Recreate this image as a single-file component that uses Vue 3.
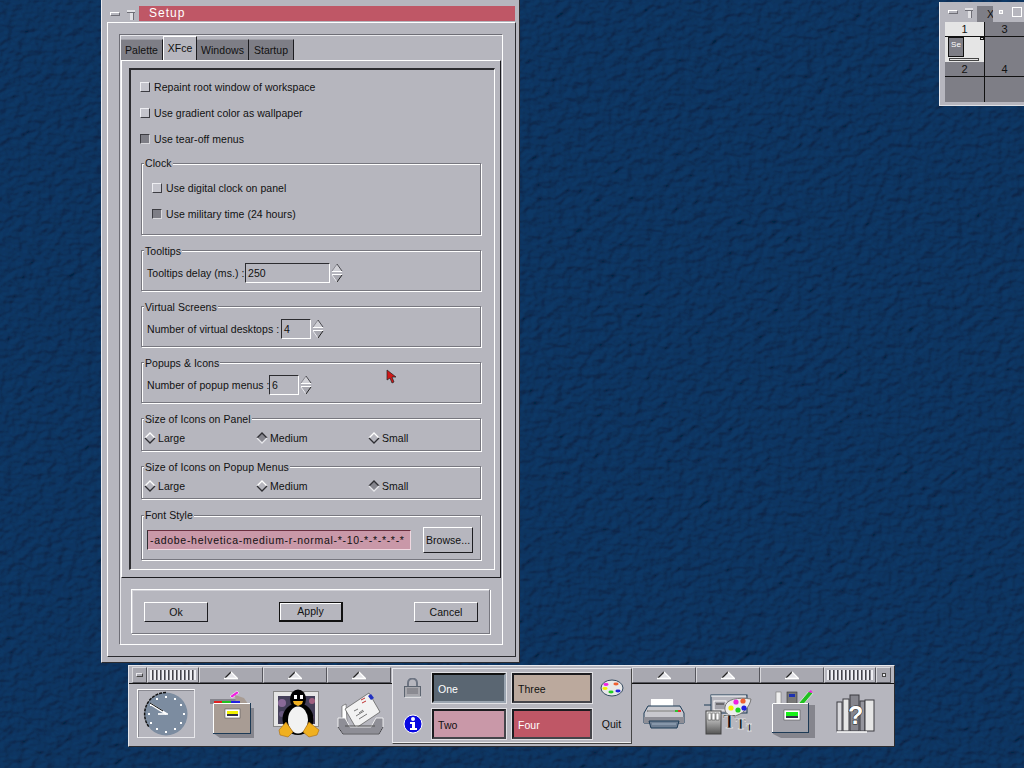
<template>
  <div class="desktop">
    <svg class="wallpaper" width="1024" height="768">
      <filter id="emboss" x="0" y="0" width="100%" height="100%">
        <feTurbulence type="fractalNoise" baseFrequency="0.1 0.13" numOctaves="2" seed="7" result="noise" />
        <feDiffuseLighting in="noise" surfaceScale="2.4" diffuseConstant="1" lighting-color="#0f3966">
          <feDistantLight azimuth="225" elevation="60" />
        </feDiffuseLighting>
      </filter>
      <rect width="1024" height="768" filter="url(#emboss)" />
    </svg>

    <!-- setup window -->
    <div class="window setup">
      <div class="titlebar">
        <span class="btn-dash"></span>
        <span class="btn-pin"></span>
        <div class="title">Setup</div>
      </div>
      <div class="frame">
        <div class="frame-inner">
          <div class="tabs">
            <div v-for="t in tabs" :key="t" class="tab" :class="{ active: t === 'XFce' }">{{ t }}</div>
          </div>
          <div class="tab-body">
            <div class="sunk">
              <div v-for="c in mainChecks" :key="c.text" class="check-row">
                <span class="check" :class="{ on: c.on }"></span>{{ c.text }}
              </div>

              <div class="groups">
                <div class="group clock">
                  <span class="legend high">Clock</span>
                  <div class="check-row">
                    <span class="check"></span>Use digital clock on panel
                  </div>
                  <div class="check-row">
                    <span class="check on"></span>Use military time (24 hours)
                  </div>
                </div>

                <div v-for="s in spinGroups" :key="s.legend" class="group spin-group">
                  <span class="legend">{{ s.legend }}</span>
                  <span class="spin-label" :style="{ width: s.labelWidth + 'px' }">{{ s.label }}</span>
                  <span class="field" :style="{ width: s.width + 'px' }">{{ s.value }}</span>
                  <svg class="spinner" width="12" height="20" viewBox="0 0 12 20">
                    <path d="M6 1 L11 8 L1 8 Z" fill="#d0d0d6" />
                    <path d="M6 1 L1 8" stroke="#8a8a92" fill="none" />
                    <path d="M6 1 L11 8" stroke="#4a4a50" fill="none" />
                    <path d="M1 8.5 H11" stroke="#fff" />
                    <path d="M1 11.5 H11" stroke="#fff" />
                    <path d="M1 12 L6 19 L11 12 Z" fill="#a8a8b0" />
                    <path d="M1 12 L6 19" stroke="#e8e8ec" fill="none" />
                    <path d="M11 12 L6 19" stroke="#222" fill="none" />
                  </svg>
                </div>

                <div v-for="r in radioGroups" :key="r.legend" class="group radio-group">
                  <span class="legend">{{ r.legend }}</span>
                  <div v-for="o in sizes" :key="o" class="radio">
                    <svg width="12" height="12" viewBox="0 0 12 12">
                      <template v-if="o === r.on">
                        <path d="M6 1 L11 6 L6 11 L1 6 Z" fill="#85858d" />
                        <path d="M1 6 L6 1 L11 6" fill="none" stroke="#2e2e33" stroke-width="1.3" />
                        <path d="M1 6 L6 11 L11 6" fill="none" stroke="#e6e6ea" stroke-width="1.3" />
                      </template>
                      <template v-else>
                        <path d="M6 1 L11 6 L6 11 L1 6 Z" fill="#b6b6be" />
                        <path d="M1 6 L6 1 L11 6" fill="none" stroke="#fff" stroke-width="1.3" />
                        <path d="M1 6 L6 11 L11 6" fill="none" stroke="#2e2e33" stroke-width="1.3" />
                      </template>
                    </svg>
                    <span>{{ o }}</span>
                  </div>
                </div>

                <div class="group font-group">
                  <span class="legend high">Font Style</span>
                  <span class="field font-field">-adobe-helvetica-medium-r-normal-*-10-*-*-*-*-*</span>
                  <span class="push browse">Browse...</span>
                </div>
              </div>
            </div>
          </div>
          <div class="actions">
            <span class="push action">Ok</span>
            <span class="push action default">Apply</span>
            <span class="push action">Cancel</span>
          </div>
        </div>
      </div>
    </div>

    <!-- pager -->
    <div class="window pager">
      <div class="pager-head">
        <span class="btn-dash small"></span>
        <span class="btn-pin small"></span>
        <span class="pager-x">X</span>
        <span class="pager-dot"></span>
        <span class="pager-square"></span>
      </div>
      <div class="pager-grid">
        <div class="desk current">
          <div class="desk-num">1</div>
          <div class="desk-area">
            <div class="mini-win">Se</div>
            <div class="mini-bar"></div>
            <div class="mini-corner"></div>
          </div>
        </div>
        <div class="desk"><div class="desk-num">3</div><div class="desk-area"></div></div>
        <div class="desk"><div class="desk-num">2</div><div class="desk-area"></div></div>
        <div class="desk"><div class="desk-num">4</div><div class="desk-area"></div></div>
      </div>
    </div>

    <!-- panel -->
    <div class="panel">
      <div class="side">
        <div class="handles">
          <span class="handle-btn"><i class="dash"></i></span>
          <span class="grip"></span>
          <span v-for="n in 3" :key="n" class="popup-btn">
            <svg width="16" height="9" viewBox="0 0 16 9"><path d="M8 1 L14 7 H2 Z" fill="#e4e4e8" /><path d="M8 1 L2 7" stroke="#222" stroke-width="1.2" /><path d="M8 1 L14 7" stroke="#fff" stroke-width="1.2" /><path d="M1 7.5 H15" stroke="#fff" stroke-width="1.6" /></svg>
          </span>
        </div>
        <div class="launchers">
          <div class="launcher clock-cell">
            <div class="clock-frame">
              <svg width="53" height="46" viewBox="0 0 53 46">
                <circle cx="27" cy="23" r="21.5" fill="#7c8ca0" />
                <path d="M27 1.5 A21.5 21.5 0 0 0 10 36" fill="none" stroke="#111" stroke-width="1.5" stroke-dasharray="3 1" />
                <g fill="#fff">
                  <rect v-for="(t, i) in clockTicks" :key="i" :x="t.x - 1" :y="t.y - 1" width="2" height="2" />
                </g>
                <path d="M27 24 L11 14 L12 12 L28 22 Z" fill="#fff" />
                <path d="M11 12 L24 20" stroke="#111" />
                <path d="M19 23 H29" stroke="#fff" stroke-width="1.6" />
              </svg>
            </div>
          </div>
          <div class="launcher">
            <svg width="44" height="48" viewBox="0 0 44 48">
              <path d="M0 9 H29 V14 H0 Z" fill="#85858d" />
              <path d="M4 18 H44 V48 H10 L3 43 Z" fill="#85858d" />
              <path d="M20 6 L27 1 L29 3 L22 8 Z" fill="#f020e0" stroke="#fff" stroke-width=".6" />
              <path d="M25 5 L34 8 L38 14 H26 Z" fill="#a89c94" />
              <rect x="4" y="11" width="8" height="3" fill="#e02020" />
              <rect x="12" y="11" width="9" height="3" fill="#20c020" />
              <rect x="21" y="11" width="9" height="3" fill="#2020e0" />
              <rect x="3.5" y="13.5" width="37" height="30" fill="#a89c94" stroke="#1d3a55" />
              <path d="M3.5 43 V13.5 H40" fill="none" stroke="#fff" />
              <rect x="15" y="19" width="15" height="9" fill="#fff" stroke="#555" stroke-width=".6" />
              <rect x="17" y="21" width="11" height="3" fill="#f0f000" />
              <rect x="17" y="24" width="11" height="2" fill="#303048" />
            </svg>
          </div>
          <div class="launcher">
            <svg width="47" height="49" viewBox="0 0 47 49">
              <rect x=".5" y="2.5" width="45" height="35" fill="#e6e6e6" stroke="#888" />
              <rect x="5" y="7" width="37" height="28" fill="#45405a" />
              <circle cx="9" cy="14" r="4" fill="#8a6a98" />
              <circle cx="9" cy="25" r="3" fill="#6a5a80" />
              <circle cx="39" cy="12" r="3" fill="#a06080" />
              <circle cx="38" cy="29" r="3" fill="#886a90" />
              <ellipse cx="25" cy="30" rx="15.5" ry="16" fill="#000" />
              <ellipse cx="25" cy="10" rx="8" ry="9.5" fill="#000" />
              <ellipse cx="25" cy="31" rx="10" ry="13.5" fill="#f2f2f2" />
              <rect x="21" y="6" width="3" height="4" fill="#fff" />
              <rect x="27" y="6" width="3" height="4" fill="#fff" />
              <path d="M20 12 L30 12 L29 15 L25 17 L21 15 Z" fill="#f0b020" />
              <path d="M6 41 L13 33 L20 43 L15 48 L7 46 Z" fill="#f0b020" stroke="#a86a10" stroke-width=".6" />
              <path d="M30 43 L36 33 L46 41 L44 46 L36 48 Z" fill="#f0b020" stroke="#a86a10" stroke-width=".6" />
            </svg>
          </div>
          <div class="launcher">
            <svg width="47" height="44" viewBox="0 0 47 44">
              <path d="M5 14 L9 12 L10 30 L5 30 Z" fill="#fff" stroke="#555" stroke-width=".6" />
              <path d="M8 17 L32 1 L43 20 L19 36 Z" fill="#f2f2f2" stroke="#555" stroke-width=".7" />
              <path d="M31 4 L34 8 L37 6 L34 2 Z" fill="#2030c0" />
              <path d="M24 8 L28 6 M25 11 L29 9" stroke="#c03030" />
              <g stroke="#777"><path d="M17 19 L21 17 M22 21 L26 18 M19 24 L27 19 M22 27 L30 22" /></g>
              <path d="M1 26 L8 26 L13 35 L34 35 L39 26 L46 26 V35 L42 42 H6 L1 35 Z" fill="#8e8e96" stroke="#fff" stroke-width=".8" />
              <path d="M1 35 L6 42 H42 L46 35" fill="none" stroke="#3e3e44" />
              <path d="M8 34 H38" stroke="#555" />
            </svg>
          </div>
        </div>
      </div>

      <div class="center">
        <div class="center-icon">
          <svg width="17" height="20" viewBox="0 0 17 20">
            <path d="M4 9 V5 A4.5 4.5 0 0 1 13 5 V9" fill="none" stroke="#6d7482" stroke-width="2" />
            <rect x=".5" y="8.5" width="16" height="10" fill="#a7a7ad" stroke="#5c6470" />
            <path d="M3 11 H14 M3 13 H14 M3 15 H14" stroke="#6f6f77" />
            <path d="M1 19 H17" stroke="#fff" />
          </svg>
        </div>
        <div class="desk-btn one">One</div>
        <div class="desk-btn three">Three</div>
        <div class="center-icon">
          <svg width="24" height="18" viewBox="0 0 24 18">
            <ellipse cx="12" cy="9" rx="11" ry="8" fill="#e8e8e8" stroke="#354a60" />
            <ellipse cx="6" cy="5.5" rx="2.6" ry="1.4" fill="#f020e0" />
            <ellipse cx="16" cy="5" rx="2.6" ry="1.4" fill="#f06030" />
            <ellipse cx="5" cy="9.5" rx="2.6" ry="1.4" fill="#f0f000" />
            <ellipse cx="18" cy="12" rx="2.6" ry="1.4" fill="#2020e0" />
            <ellipse cx="11" cy="13" rx="2.6" ry="1.4" fill="#20d020" />
          </svg>
        </div>
        <div class="center-icon">
          <svg width="20" height="20" viewBox="0 0 20 20">
            <circle cx="10" cy="10" r="9" fill="#0808e0" stroke="#fff" />
            <circle cx="10" cy="5" r="2" fill="#fff" />
            <path d="M7 8 H12 V14 H14 V16 H7 V14 H9 V10 H7 Z" fill="#fff" />
          </svg>
        </div>
        <div class="desk-btn two">Two</div>
        <div class="desk-btn four">Four</div>
        <div class="center-icon quit">Quit</div>
      </div>

      <div class="side right">
        <div class="handles">
          <span v-for="n in 3" :key="n" class="popup-btn">
            <svg width="16" height="9" viewBox="0 0 16 9"><path d="M8 1 L14 7 H2 Z" fill="#e4e4e8" /><path d="M8 1 L2 7" stroke="#222" stroke-width="1.2" /><path d="M8 1 L14 7" stroke="#fff" stroke-width="1.2" /><path d="M1 7.5 H15" stroke="#fff" stroke-width="1.6" /></svg>
          </span>
          <span class="grip"></span>
          <span class="handle-btn"><i class="dot"></i></span>
        </div>
        <div class="launchers">
          <div class="launcher">
            <svg width="43" height="30" viewBox="0 0 43 30">
              <rect x="8" y="0" width="22" height="9" fill="#fff" />
              <path d="M1 14 L5 7 H37 L41 14 V24 H1 Z" fill="#c8c8ce" stroke="#1d3a55" />
              <path d="M5 12 H37" stroke="#fff" stroke-width="1.4" />
              <path d="M4 12 H32" stroke="#333" stroke-width=".8" />
              <rect x="32" y="11" width="3" height="2" fill="#30c030" />
              <rect x="35" y="11" width="3" height="2" fill="#e03030" />
              <path d="M1 18 H41 V24 H1 Z" fill="#8e8e96" />
              <path d="M6 22 H36 L34 29 H8 Z" fill="#6e7e92" stroke="#1d3a55" />
              <path d="M9 25 H33" stroke="#9fb0c2" />
            </svg>
          </div>
          <div class="launcher">
            <svg width="48" height="42" viewBox="0 0 48 42">
              <rect x="7" y="2" width="36" height="18" fill="#b6b6be" stroke="#1d3a55" />
              <path d="M7 3 H42" stroke="#fff" />
              <rect x="10" y="8" width="12" height="9" fill="#a0a0a8" stroke="#fff" />
              <path d="M12 11 H20" stroke="#333" />
              <path d="M0 12 H7" stroke="#1d3a55" />
              <path d="M21 14 C22 6 34 4 47 6 C46 14 38 22 30 23 C25 23 20 20 21 14 Z" fill="#ececec" stroke="#777" />
              <circle cx="32" cy="9" r="2.6" fill="#f020e0" />
              <circle cx="39" cy="8" r="2.6" fill="#f06030" />
              <circle cx="27" cy="15" r="2.6" fill="#f0f000" />
              <circle cx="34" cy="17" r="2.6" fill="#20d020" />
              <circle cx="40" cy="15" r="2.6" fill="#2020e0" />
              <defs>
                <linearGradient id="tube" x1="0" y1="0" x2="0" y2="1"><stop offset="0" stop-color="#f2f2f2" /><stop offset="1" stop-color="#555" /></linearGradient>
              </defs>
              <rect x="2" y="18" width="15" height="23" fill="url(#tube)" stroke="#444" />
              <rect x="4" y="20" width="3" height="7" fill="#fff" stroke="#333" stroke-width=".5" />
              <rect x="8" y="20" width="3" height="7" fill="#fff" stroke="#333" stroke-width=".5" />
              <rect x="12" y="20" width="3" height="7" fill="#fff" stroke="#333" stroke-width=".5" />
              <text x="19" y="35" class="t-stack"><tspan font-size="19">T</tspan><tspan font-size="15" dy="1">T</tspan><tspan font-size="11" dy="2">T</tspan></text>
            </svg>
          </div>
          <div class="launcher">
            <svg width="46" height="48" viewBox="0 0 46 48">
              <rect x="7" y="2" width="5" height="16" fill="#f0f0f0" stroke="#777" stroke-width=".6" />
              <rect x="18" y="2" width="10" height="14" fill="#777" stroke="#333" stroke-width=".6" />
              <rect x="20" y="4" width="6" height="3" fill="#1c30b0" />
              <path d="M29 14 L40 1 L44 3 L33 16 Z" fill="#20c020" stroke="#fff" stroke-width=".6" />
              <path d="M39 2 L42 0 L44 3 Z" fill="#f020e0" />
              <path d="M4 15 H46 V48 H12 L4 44 Z" fill="#85858d" />
              <rect x="3.5" y="13.5" width="36" height="29" fill="#a2a2aa" stroke="#1d3a55" />
              <path d="M3.5 42 V13.5 H39" fill="none" stroke="#fff" />
              <rect x="15" y="20" width="16" height="10" fill="#fff" stroke="#555" stroke-width=".6" />
              <rect x="17" y="22" width="12" height="4" fill="#18f018" />
              <rect x="17" y="26" width="12" height="2" fill="#303048" />
            </svg>
          </div>
          <div class="launcher">
            <svg width="40" height="40" viewBox="0 0 40 40">
              <rect x="1" y="8" width="5" height="29" fill="#d8d8dc" stroke="#3a3a40" />
              <rect x="7" y="5" width="6" height="32" fill="#e6e6e6" stroke="#3a3a40" />
              <rect x="14" y="1" width="9" height="36" fill="#85858d" stroke="#3a3a40" />
              <rect x="24" y="7" width="5" height="30" fill="#95959d" stroke="#3a3a40" />
              <rect x="29" y="6" width="9" height="31" fill="#e6e6e6" stroke="#3a3a40" />
              <path d="M1 38 H31" stroke="#fff" stroke-width="1.4" />
              <text x="12" y="30" class="t-help">?</text>
            </svg>
          </div>
        </div>
      </div>
    </div>

    <!-- mouse pointer -->
    <svg class="pointer" width="12" height="16" viewBox="0 0 12 16">
      <path d="M1 1 L1 11 L4 9 L6 14 L8 13 L6 8 L10 8 Z" fill="#d01818" stroke="#222" stroke-width=".7" />
    </svg>
  </div>
</template>

<script setup>
const tabs = ['Palette', 'XFce', 'Windows', 'Startup']
const sizes = ['Large', 'Medium', 'Small']

const mainChecks = [
  { text: 'Repaint root window of workspace', on: false },
  { text: 'Use gradient color as wallpaper', on: false },
  { text: 'Use tear-off menus', on: true }
]

const spinGroups = [
  { legend: 'Tooltips', label: 'Tooltips delay (ms.) :', labelWidth: 98, value: '250', width: 85 },
  { legend: 'Virtual Screens', label: 'Number of virtual desktops :', labelWidth: 134, value: '4', width: 30 },
  { legend: 'Popups & Icons', label: 'Number of popup menus :', labelWidth: 122, value: '6', width: 30 }
]

const radioGroups = [
  { legend: 'Size of Icons on Panel', on: 'Medium' },
  { legend: 'Size of Icons on Popup Menus', on: 'Small' }
]

// twelve dots round the clock face
const clockTicks = Array.from({ length: 12 }, (_, i) => {
  const a = (i * Math.PI) / 6
  return { x: Math.round(27 + 17.5 * Math.sin(a)), y: Math.round(23 - 17.5 * Math.cos(a)) }
})
</script>

<style scoped>
.desktop {
  position: relative;
  width: 1024px;
  height: 768px;
  overflow: hidden;
  background: #0f3966;
  font-family: "Liberation Sans", Arial, sans-serif;
  font-size: 10.5px;
  letter-spacing: 0.05px;
  color: #111;
}
.desktop * {
  box-sizing: border-box;
}
.wallpaper {
  position: absolute;
  left: 0;
  top: 0;
  display: block;
}
.pointer {
  position: absolute;
  left: 386px;
  top: 369px;
  display: block;
}
.window {
  position: absolute;
  background: #b6b6be;
}

/* setup window */
.setup {
  left: 101px;
  top: 0;
  width: 419px;
  height: 663px;
  padding: 0 3px 6px 5px;
  border-left: 1px solid #e8e8ec;
  border-bottom: 1px solid #2c2c30;
  border-right: 1px solid #2c2c30;
}
.titlebar {
  height: 22px;
  display: flex;
  align-items: center;
  padding-top: 6px;
  padding-bottom: 1px;
}
.btn-dash {
  width: 10px;
  height: 4px;
  margin-left: 3px;
  border: 1px solid #fff;
  border-right-color: #6f6f77;
  border-bottom-color: #6f6f77;
}
.btn-pin {
  position: relative;
  width: 8px;
  height: 3px;
  margin-left: 7px;
  margin-bottom: 5px;
  background: #e0e0e4;
  border-bottom: 1px solid #6f6f77;
}
.btn-pin::after {
  content: "";
  position: absolute;
  left: 3px;
  top: 3px;
  width: 3px;
  height: 7px;
  background: #e0e0e4;
  border-right: 1px solid #6f6f77;
}
.title {
  margin-left: 4px;
  margin-right: 1px;
  flex: 1;
  height: 15px;
  background: #bf5766;
  color: #fff;
  padding-left: 10px;
  font-size: 12px;
  letter-spacing: 1px;
  line-height: 15px;
}
.frame {
  height: 635px;
  padding: 11px 12px 11px 11px;
  border: 1px solid;
  border-color: #fff #2c2c30 #2c2c30 #fff;
}
.frame-inner {
  height: 100%;
  padding: 1px 1px 0 1px;
  border: 1px solid;
  border-color: #6e6e76 #fff #fff #6e6e76;
  box-shadow: inset 1px 1px 0 #e8e8ec;
}
.tabs {
  display: flex;
  height: 24px;
  align-items: flex-end;
}
.tab {
  width: 52px;
  height: 21px;
  text-align: center;
  line-height: 21px;
  background: #7e7e86;
  border-top: 1px solid #a0a0a8;
  border-right: 1px solid #1c1c20;
}
.tab:nth-child(1) {
  width: 42px;
}
.tab:nth-child(4) {
  width: 45px;
}
.tab.active {
  width: 34px;
  height: 24px;
  line-height: 22px;
  background: #b6b6be;
  border-top: 1px solid #fff;
  border-left: 1px solid #fff;
}
.tab-body {
  height: 518px;
  padding: 7px 5px 7px 7px;
  border: 1px solid;
  border-color: #fff #1c1c20 #1c1c20 #fff;
}
.sunk {
  height: 100%;
  padding: 4px 11px 0 9px;
  border-style: solid;
  border-width: 2px 1px 1px 2px;
  border-color: #2c2c30 #fff #fff #2c2c30;
}
.check-row {
  height: 26px;
  display: flex;
  align-items: center;
}
.check {
  width: 10px;
  height: 10px;
  margin-right: 4px;
  background: #c4c4cc;
  border: 1px solid;
  border-color: #eeeef2 #3c3c42 #3c3c42 #eeeef2;
  flex: none;
}
.check.on {
  background: #7e7e86;
  border-color: #3c3c42 #d8d8dc #d8d8dc #3c3c42;
}
.groups {
  display: flex;
  flex-direction: column;
  gap: 15px;
  margin: 11px 0 0 1px;
}
.group {
  position: relative;
  width: 340px;
  border: 1px solid #77777f;
  box-shadow: inset 1px 1px 0 #fff, 1px 1px 0 #fff;
}
.legend {
  position: absolute;
  top: -6px;
  left: 2px;
  padding: 0 1px;
  line-height: 13px;
  background: #b6b6be;
}
.legend.high {
  top: -7px;
}
.clock {
  height: 72px;
  padding: 11px 0 0 10px;
}
.spin-group {
  height: 41px;
  display: flex;
  align-items: center;
  padding: 5px 0 0 5px;
}
.spin-label {
  flex: none;
  white-space: nowrap;
}
.field {
  display: block;
  height: 20px;
  padding-left: 2px;
  line-height: 18px;
  border: 1px solid;
  border-color: #2c2c30 #fff #fff #2c2c30;
  background: #b6b6be;
}
.spinner {
  display: block;
  margin-left: 1px;
  flex: none;
}
.radio-group {
  height: 33px;
  display: grid;
  grid-template-columns: 112px 112px 112px;
  padding: 12px 0 0 2px;
}
.radio {
  display: flex;
  align-items: center;
  height: 14px;
  gap: 2px;
}
.radio svg {
  display: block;
  flex: none;
}
.font-group {
  height: 45px;
  margin-top: 1px;
  display: flex;
  align-items: center;
  padding: 4px 0 0 5px;
}
.font-field {
  width: 264px;
  background: #c998a8;
  border-color: #6a3040 #f0d8e0 #f0d8e0 #2c2c30;
  white-space: nowrap;
  overflow: hidden;
  letter-spacing: 0.7px;
  flex: none;
}
.push {
  display: block;
  text-align: center;
  background: #b6b6be;
  border: 1px solid;
  border-color: #fff #1c1c20 #1c1c20 #fff;
}
.browse {
  width: 50px;
  height: 26px;
  margin-left: 12px;
  line-height: 24px;
}
.actions {
  margin: 11px 0 0 10px;
  width: 359px;
  height: 45px;
  display: flex;
  justify-content: space-between;
  align-items: center;
  padding: 0 11px 0 12px;
  border: 1px solid;
  border-color: #fff #77777f #77777f #fff;
  box-shadow: inset 1px 1px 0 #d0d0d6, 1px 1px 0 #fff;
}
.action {
  width: 64px;
  height: 20px;
  line-height: 18px;
}
.action.default {
  border: 1px solid #111;
  border-width: 1px 2px 2px 1px;
  box-shadow: inset 1px 1px 0 #fff;
  line-height: 17px;
}

/* pager */
.pager {
  left: 939px;
  top: 2px;
  width: 85px;
  height: 104px;
  border-left: 1px solid #e8e8ec;
  border-bottom: 1px solid #e0e0e4;
  padding: 0 0 4px 5px;
}
.pager-head {
  height: 20px;
  display: flex;
  align-items: center;
  padding-left: 2px;
}
.btn-dash.small {
  width: 10px;
  margin-left: 1px;
  flex: none;
}
.btn-pin.small {
  margin-left: 7px;
  flex: none;
}
.pager-x {
  width: 16px;
  height: 16px;
  margin-left: 4px;
  align-self: flex-end;
  padding-left: 10px;
  background: #7e7e86;
  line-height: 16px;
  overflow: hidden;
}
.pager-dot {
  width: 4px;
  height: 4px;
  margin-left: 6px;
  background: #d0d0d6;
  border: 1px solid #fff;
}
.pager-square {
  width: 10px;
  height: 10px;
  margin-left: 9px;
  border: 1px solid #fff;
  flex: none;
}
.pager-grid {
  display: grid;
  grid-template-columns: 40px 39px;
  grid-template-rows: 40px 40px;
  background: #7e7e86;
}
.desk {
  display: flex;
  flex-direction: column;
}
.desk:nth-child(odd) {
  border-right: 1px solid #111;
}
.desk.current {
  background: #e5e5e5;
}
.desk-num {
  height: 15px;
  text-align: center;
  line-height: 15px;
  border-bottom: 1px solid #111;
  font-size: 11px;
}
.desk-area {
  position: relative;
  flex: 1;
}
.mini-win {
  position: absolute;
  left: 3px;
  top: 0;
  width: 16px;
  height: 20px;
  padding: 2px 0 0 2px;
  background: #7e7e86;
  border: 1px solid #111;
  color: #fff;
  font-size: 8px;
  line-height: 9px;
  overflow: hidden;
}
.mini-bar {
  position: absolute;
  left: 4px;
  top: 21px;
  width: 30px;
  height: 3px;
  background: #e5e5e5;
  border: 1px solid #444;
}
.mini-corner {
  position: absolute;
  right: 0;
  top: 0;
  width: 4px;
  height: 3px;
  border: 1px solid #111;
  background: #e5e5e5;
}

/* panel */
.panel {
  position: absolute;
  left: 128px;
  top: 665px;
  width: 767px;
  height: 82px;
  display: flex;
  background: #b6b6be;
  border: 1px solid;
  border-color: #e8e8ec #2c2c30 #2c2c30 #e8e8ec;
}
.side {
  width: 263px;
  display: flex;
  flex-direction: column;
  padding-top: 1px;
}
.side.right {
  flex: 1;
  width: auto;
}
.handles {
  height: 17px;
  display: flex;
  padding-left: 3px;
  border-bottom: 1px solid #111;
}
.side.right .handles {
  padding-left: 0;
  padding-right: 2px;
}
.handle-btn,
.popup-btn,
.grip {
  display: flex;
  align-items: center;
  justify-content: center;
  height: 16px;
  background: #a8a8b0;
  border: 1px solid;
  border-color: #d8d8dc #55555c #55555c #d8d8dc;
  flex: none;
}
.handle-btn {
  width: 15px;
}
.handle-btn .dash {
  width: 7px;
  height: 4px;
  border: 1px solid #e8e8ec;
  border-right-color: #444;
  border-bottom-color: #444;
}
.handle-btn .dot {
  width: 4px;
  height: 4px;
  background: #e8e8ec;
  border: 1px solid #444;
}
.grip {
  width: 52px;
  background-color: #b6b6be;
  background-image: repeating-linear-gradient(90deg, #f0f0f4 0 2px, #44444a 2px 3px, #8a8a92 3px 4px);
  background-origin: content-box;
  background-clip: content-box;
  padding: 2px;
}
.popup-btn {
  width: 64px;
}
.launchers {
  flex: 1;
  display: flex;
  align-items: center;
  padding: 0 0 3px 7px;
}
.side.right .launchers {
  padding-left: 0;
}
.launcher {
  width: 64px;
  display: flex;
  align-items: center;
  justify-content: center;
}
.launcher svg {
  display: block;
}
.clock-cell {
  justify-content: flex-start;
  padding-left: 1px;
}
.clock-frame {
  width: 58px;
  height: 49px;
  padding: 1px;
  border: 1px solid;
  border-color: #fff #e8e8ec #e8e8ec #fff;
  box-shadow: inset 1px 1px 0 #8a8a92;
}
.center {
  width: 240px;
  height: 76px;
  margin-top: 2px;
  padding-top: 4px;
  display: grid;
  grid-template-columns: 39px 74px 86px 1fr;
  grid-template-rows: 30px 30px;
  row-gap: 6px;
  align-content: start;
  border: 1px solid;
  border-color: #e8e8ec #444 #444 #e8e8ec;
  box-shadow: inset 0 -1px 0 #eee;
}
.center-icon {
  display: flex;
  align-items: center;
  justify-content: center;
}
.desk-btn {
  height: 30px;
  padding-left: 4px;
  line-height: 28px;
  border: 2px solid #1c1c20;
  border-right-color: #44444a;
  border-bottom-color: #44444a;
  box-shadow: 0 0 0 1px #e0e0e4;
}
.desk-btn.three,
.desk-btn.four {
  margin-left: 6px;
  width: 80px;
}
.one {
  background: #5a6672;
  color: #fff;
  border-color: #111 #9aa4b0 #9aa4b0 #111;
}
.two {
  background: #c998a8;
}
.three {
  background: #bba99d;
}
.four {
  background: #bf5766;
  color: #fff;
}
.t-stack {
  font-family: "Liberation Serif", serif;
  font-weight: 700;
  fill: #111;
  stroke: #fff;
  stroke-width: 0.4;
  letter-spacing: 0;
}
.t-help {
  font-family: "Liberation Sans", sans-serif;
  font-weight: 700;
  font-size: 25px;
  fill: #fff;
  stroke: #222;
  stroke-width: 1;
  paint-order: stroke;
  letter-spacing: 0;
}
</style>

<style>
html,
body {
  margin: 0;
  background: #0f3966;
}
</style>
